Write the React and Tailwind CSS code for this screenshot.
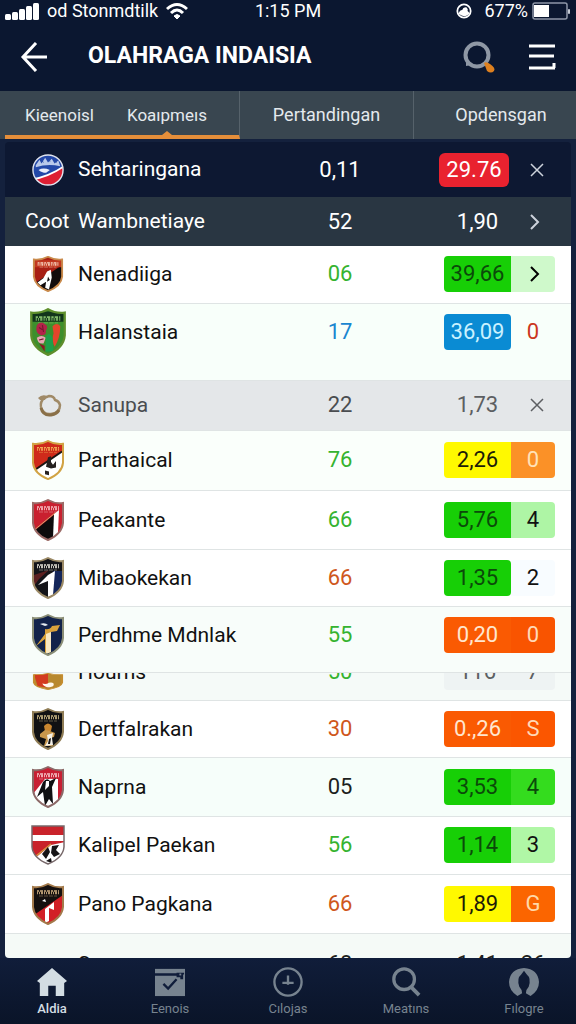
import React, { useId, useState } from 'react';

const Shield = ({ edge, base, className, children }) => {
  const id = useId();
  const outline = 'M2 4 Q10 5 17 1 Q24 5 32 4 V24 Q31 35 17 41 Q3 35 2 24 Z';
  return (
    <svg viewBox="0 0 34 42" preserveAspectRatio="none" className={className} aria-hidden="true">
      <clipPath id={id}>
        <path d={outline} />
      </clipPath>
      <g clipPath={`url(#${id})`}>
        <path d={outline} fill={base} />
        {children}
      </g>
      <path d={outline} fill="none" stroke={edge} strokeWidth="2" />
    </svg>
  );
};

const Band = ({ color }) => (
  <g stroke={color} fill="none">
    <path d="M6 8 H28" strokeWidth="1.5" strokeDasharray="2 1 3 1" opacity="0.9" />
    <path d="M6 10 H28" strokeWidth="2.5" strokeDasharray="1 1 1 1 2 1" opacity="0.8" />
    <path d="M8 13 H26" strokeWidth="1" strokeDasharray="4 1" opacity="0.4" />
  </g>
);

const crests = {
  globe: (
    <svg viewBox="0 0 34 34" className="mx-auto size-8" aria-hidden="true">
      <clipPath id="globe-clip">
        <circle cx="17" cy="17" r="16" />
      </clipPath>
      <g clipPath="url(#globe-clip)">
        <rect width="34" height="34" fill="#2348a8" />
        <path d="M4 12 L8 6 L10 10 L14 4 L17 9 L21 5 L24 10 L28 7 L30 13 Q17 10 4 14 Z" fill="#b9c9ea" />
        <path d="M10 6 L12 9 M18 4 L19 8 M25 6 L26 9" stroke="#2348a8" strokeWidth="1" />
        <path d="M7 17 Q12 14 19 17 L15 20 Q10 20 7 17 Z" fill="#e9eefb" />
        <path d="M0 26 Q18 23 34 12 V34 H0 Z" fill="#fff" />
        <path d="M0 28 Q18 25 34 14 V34 H0 Z" fill="#de1f33" />
      </g>
      <circle cx="17" cy="17" r="16" fill="none" stroke="#dfe3ee" strokeWidth="1.5" />
    </svg>
  ),
  nenadiiga: (
    <Shield edge="#c98a4b" base="#a81f14" className="mx-auto h-9 w-8">
      <path d="M0 34 L34 9 V42 H0 Z" fill="#120c0c" />
      <path d="M2 5 H32 V13 H2 Z" fill="#c2371f" />
      <Band color="#ffe9d6" />
      <path d="M6 31 L12 26 L16 18 L20 16 L21 25 L18 39 L14 37 L15 30 L9 34 Z" fill="#fff" />
      <path d="M17 24 L19 28 L16 30 Z" fill="#120c0c" />
    </Shield>
  ),
  halanstaia: (
    <Shield edge="#5f8f2c" base="#3d8f2d" className="mx-auto h-12 w-[38px]">
      <path d="M3 3 H31 V12 H3 Z" fill="#12351b" />
      <Band color="#8fca73" />
      <path d="M7 15 Q10 11 14 14 Q18 16 15 20 Q16 24 11 24 Q5 22 7 15 Z" fill="#b22349" />
      <path d="M7 26 Q11 23 15 26 L13 31 Q8 32 7 26 Z" fill="#e7a7b4" />
      <path d="M9 17 L12 19 M12 15 L13 21 M9 28 L13 27" stroke="#7a1430" strokeWidth="1" />
      <path d="M21 16 Q25 12 28 16 Q28 26 23 34 Q20 28 22 22 Z" fill="#e5452b" />
      <path d="M15 25 Q18 20 21 26 L22 38 H15 Z" fill="#1da04b" />
      <path d="M9 31 L14 33 L14 38 Z" fill="#8c1823" />
    </Shield>
  ),
  sanupa: (
    <svg viewBox="0 0 26 26" className="ml-5 size-[26px]" aria-hidden="true">
      <path d="M7 6 Q3 10 4 15 Q6 23 14 22 Q23 21 23 13 Q22 9 18 8 Q17 4 12 4 L7 6 Z" fill="none" stroke="#a08a67" strokeWidth="2.5" />
      <path d="M1 6 Q5 2 10 4 L8 8 L3 8 Z" fill="#a08a67" />
      <path d="M4 16 Q6 24 14 23 Q20 22 22 18" fill="none" stroke="#8a7048" strokeWidth="3" />
    </svg>
  ),
  parthaical: (
    <Shield edge="#d1a344" base="#cf2a1a" className="mx-auto h-10 w-[34px]">
      <Band color="#f3b65a" />
      <path d="M3 32 L31 12 V42 H3 Z" fill="#fff" />
      <path d="M3 32 L31 12" stroke="#1b1412" strokeWidth="2" />
      <path d="M17 18 L20 17 L20 23 L22 26 L25 22 L25 29 L20 30 L15 28 Z M14 32 L18 33 L18 37 L14 36 Z" fill="#26201f" />
    </Shield>
  ),
  peakante: (
    <Shield edge="#9b6a66" base="#c9202f" className="mx-auto h-[42px] w-[34px]">
      <Band color="#f7c9cb" />
      <path d="M2 33 L24 15 L23 42 H2 Z" fill="#0d0b0c" />
      <path d="M23 15 L28 11 L27 34 L22 39 Z" fill="#fff" />
      <path d="M2 32 L24 14" stroke="#d9a36b" strokeWidth="1" />
    </Shield>
  ),
  mibaokekan: (
    <Shield edge="#9c8a66" base="#141418" className="mx-auto h-[42px] w-[34px]">
      <path d="M22 14 H34 V42 H22 Z" fill="#14265a" />
      <path d="M3 18 L18 13 L8 22 L3 29 Z" fill="#5b2020" />
      <Band color="#f3efe4" />
      <path d="M7 28 L17 18 L24 14 L22 38 L17 40 V24 Z" fill="#fff" />
    </Shield>
  ),
  perdhme: (
    <Shield edge="#8b8e76" base="#12224a" className="mx-auto h-[42px] w-[34px]">
      <path d="M9 10 Q14 8 17 11 L14 12 Z" fill="#e8edf2" />
      <path d="M14 15 Q19 16 21 12 L29 11 L26 17 L20 18 V38 L14 40 V25 L5 32 L14 20 Z" fill="#d9a23c" />
      <path d="M15 20 L20 18 V38 L15 40 Z" fill="#f8e8c2" />
    </Shield>
  ),
  hourns: (
    <Shield edge="#c58d2f" base="#b8892f" className="mx-auto h-[34px] w-8">
      <path d="M2 2 H17 V36 L6 33 Z" fill="#d33b1f" />
      <path d="M11 26 Q15 29 18 24 Q24 22 23 30 Q22 35 16 35 Q12 33 11 26 Z" fill="#fff7ec" />
    </Shield>
  ),
  dertfalrakan: (
    <Shield edge="#8f7c55" base="#111113" className="mx-auto h-[42px] w-[34px]">
      <Band color="#d9c48e" />
      <path d="M13 18 Q17 13 21 18 L20 23 H14 Z" fill="#c98630" />
      <path d="M9 26 L14 22 L19 23 L24 25 L23 29 L19 30 L22 38 L13 38 L15 31 L9 29 Z" fill="#c9974c" />
      <path d="M16 27 L22 25 L21 30 L22 37 L14 38 L17 33 Z" fill="#f4f1e8" />
      <path d="M18 31 L20 30 L19 36 L17 36 Z" fill="#111113" />
    </Shield>
  ),
  naprna: (
    <Shield edge="#8c6a68" base="#c81f33" className="mx-auto h-[42px] w-[34px]">
      <Band color="#f7cfd2" />
      <path d="M2 28 L14 13 L27 13 V34 L17 42 H2 Z" fill="#fff" />
      <path d="M12 16 Q16 11 19 15 L25 12 L21 21 L22 38 L18 33 L14 40 L12 26 L6 31 Z" fill="#101012" />
      <path d="M15 15 L18 15 L18 20 L14 24 Z" fill="#fff" />
    </Shield>
  ),
  kalipel: (
    <svg viewBox="0 0 34 40" className="mx-auto h-10 w-[34px]" aria-hidden="true">
      <clipPath id="kalipel-clip">
        <path d="M1 1 H33 V22 Q32 33 17 39 Q2 33 1 22 Z" />
      </clipPath>
      <g clipPath="url(#kalipel-clip)">
        <rect width="34" height="40" fill="#c9232b" />
        <rect y="10" width="34" height="6" fill="#fff" />
        <path d="M3 34 L20 20 L34 17 V40 H3 Z" fill="#fff" />
        <path d="M5 31 L20 19" stroke="#d39a3d" strokeWidth="1.5" />
        <path d="M11 29 L17 22 L19 27 L15 34 Z M21 21 L28 20 L25 25 L29 29 L23 32 L20 28 Z M15 36 L20 33 L21 38 Z" fill="#161416" />
      </g>
      <path d="M1 1 H33 V22 Q32 33 17 39 Q2 33 1 22 Z" fill="none" stroke="#77696b" strokeWidth="1.5" />
    </svg>
  ),
  pano: (
    <Shield edge="#a37a4b" base="#15100f" className="mx-auto h-[42px] w-[34px]">
      <path d="M3 32 L32 12 V42 H3 Z" fill="#d21f26" />
      <Band color="#dcb98a" />
      <path d="M11 18 L14 16 L15 19 Z" fill="#fff" />
      <path d="M14 26 L23 19 L23 27 L18 25 V38 L14 40 Z" fill="#fff" />
    </Shield>
  ),
};

const times = [
  { crest: 'nenadiiga', nome: 'Nenadiiga', pontos: '06', cor: 'text-[#35b32f]', valor: '39,66', caixa: 'bg-[#17cf06] text-[#0b4a0a]', rank: '>', rankCor: 'bg-[#cff9cb] text-black', linha: 'h-[57px] bg-white' },
  { crest: 'halanstaia', nome: 'Halanstaia', pontos: '17', cor: 'text-[#1a86d0]', valor: '36,09', caixa: 'bg-[#0a8bd3] text-[#c9f1ff] rounded-r', rank: '0', rankCor: 'text-[#cb3720]', linha: 'h-[77px] bg-[#f8fffa] *:pb-5' },
  { crest: 'sanupa', nome: 'Sanupa', pontos: '22', cor: 'text-[#4a4d50]', valor: '1,73', caixa: 'text-[#5c5f62]', rank: 'x', rankCor: 'pl-2 text-[#5c5f62]', linha: 'h-[50px] bg-[#e4e7e9] text-[#4a4d50]' },
  { crest: 'parthaical', nome: 'Parthaical', pontos: '76', cor: 'text-[#35b32f]', valor: '2,26', caixa: 'bg-[#fff900] text-[#1c1c08]', rank: '0', rankCor: 'bg-[#fb9127] text-[#ffe2b8]', linha: 'h-[60px] bg-[#fafffb]' },
  { crest: 'peakante', nome: 'Peakante', pontos: '66', cor: 'text-[#35b32f]', valor: '5,76', caixa: 'bg-[#17cf06] text-[#0b4a0a]', rank: '4', rankCor: 'bg-[#aef5a5] text-[#111]', linha: 'h-[59px] bg-white' },
  { crest: 'mibaokekan', nome: 'Mibaokekan', pontos: '66', cor: 'text-[#cf571c]', valor: '1,35', caixa: 'bg-[#17cf06] text-[#0b4a0a] rounded-r-sm', rank: '2', rankCor: 'bg-[#f8fcff] text-[#111]', linha: 'h-[57px] bg-white' },
  { crest: 'perdhme', nome: 'Perdhme Mdnlak', pontos: '55', cor: 'text-[#35b32f]', valor: '0,20', caixa: 'bg-[#fa5a02] text-[#ffe6cf]', rank: '0', rankCor: 'bg-[#f95400] text-[#ffd9b8]', linha: 'h-[66px] bg-[#f8fdfa] *:pb-2' },
  { crest: 'hourns', nome: 'Hourns', pontos: '50', cor: 'text-[#35b32f]', valor: '116', caixa: 'bg-[#eef3f3] text-[#5c5f62]', rank: '7', rankCor: 'bg-[#eef3f3] text-[#5c5f62]', linha: 'bg-[#f5faf8]', corte: 'topo' },
  { crest: 'dertfalrakan', nome: 'Dertfalrakan', pontos: '30', cor: 'text-[#cf571c]', valor: '0.,26', caixa: 'bg-[#fa5a02] text-[#ffe6cf]', rank: 'S', rankCor: 'bg-[#fb5600] text-[#ffd9b8]', linha: 'h-[57px] bg-white' },
  { crest: 'naprna', nome: 'Naprna', pontos: '05', cor: 'text-[#1d1f20]', valor: '3,53', caixa: 'bg-[#17cf06] text-[#0b4a0a]', rank: '4', rankCor: 'bg-[#34dc1e] text-[#0b4a0a]', linha: 'h-[59px] bg-[#f6fefa]' },
  { crest: 'kalipel', nome: 'Kalipel Paekan', pontos: '56', cor: 'text-[#35b32f]', valor: '1,14', caixa: 'bg-[#17cf06] text-[#0b4a0a]', rank: '3', rankCor: 'bg-[#b0f7a6] text-[#111]', linha: 'h-[58px] bg-white' },
  { crest: 'pano', nome: 'Pano Pagkana', pontos: '66', cor: 'text-[#cf571c]', valor: '1,89', caixa: 'bg-[#fff900] text-[#1c1c08]', rank: 'G', rankCor: 'bg-[#fb6500] text-[#ffd9a8]', linha: 'h-[59px] bg-white' },
  { nome: 'Sa', pontos: '68', cor: 'text-[#1d1f20]', valor: '1,41', caixa: 'text-[#1d1f20]', rank: '26', rankCor: 'text-[#1d1f20]', linha: 'bg-[#f5faf7]', corte: 'base' },
];

const Close = () => (
  <svg viewBox="0 0 16 16" className="size-4" fill="none" stroke="currentColor" strokeWidth="1.5" aria-hidden="true">
    <path d="M2 2 L14 14 M14 2 L2 14" />
  </svg>
);

const Chevron = () => (
  <svg viewBox="0 0 16 16" className="size-4" fill="none" stroke="currentColor" strokeWidth="2" aria-hidden="true">
    <path d="M6 1 L13 8 L6 15" />
  </svg>
);

// Linhas cortadas mostram só a parte de baixo ou de cima do conteúdo
const Corte = ({ tipo, children }) => {
  if (tipo === 'topo') {
    return <div className="flex h-[27px] flex-col justify-end overflow-hidden pb-2.5">{children}</div>;
  }
  if (tipo === 'base') {
    return <div className="h-6 overflow-hidden pt-3">{children}</div>;
  }
  return children;
};

const Linha = ({ time }) => (
  <tr className={`border-b border-[#dfe4e4] last:border-b-0 ${time.linha}`}>
    <td className="pl-3">
      <Corte tipo={time.corte}>{time.crest && crests[time.crest]}</Corte>
    </td>
    <th scope="row" className="text-left text-[21px] font-normal whitespace-nowrap">
      <Corte tipo={time.corte}><span className="block leading-9">{time.nome}</span></Corte>
    </th>
    <td className={`text-center ${time.cor}`}>
      <Corte tipo={time.corte}><span className="block leading-9">{time.pontos}</span></Corte>
    </td>
    <td>
      <Corte tipo={time.corte}>
        <span className={`ml-auto block w-[67px] shrink-0 rounded-l text-center leading-9 ${time.caixa}`}>{time.valor}</span>
      </Corte>
    </td>
    <td className="pr-4">
      <Corte tipo={time.corte}>
        {time.rank === '>' || time.rank === 'x' ? (
          <button
            aria-label={time.rank === 'x' ? 'Tutup' : 'Buka'}
            className={`flex h-9 w-full items-center justify-center rounded-r ${time.rankCor}`}
          >
            {time.rank === 'x' ? <Close /> : <Chevron />}
          </button>
        ) : (
          <span className={`block shrink-0 rounded-r text-center leading-9 ${time.rankCor}`}>{time.rank}</span>
        )}
      </Corte>
    </td>
  </tr>
);

const menu = [
  {
    nome: 'Aldia',
    icone: (
      <svg viewBox="0 0 32 32" className="size-[30px]" fill="currentColor" aria-hidden="true">
        <path d="M16 1 L32 15 L29 17 V31 H20 V20 H12 V31 H3 V17 L0 15 Z" />
      </svg>
    ),
  },
  {
    nome: 'Eenois',
    icone: (
      <svg viewBox="0 0 32 32" className="size-[30px]" aria-hidden="true">
        <path d="M0 2 H32 V31 H0 Z" fill="currentColor" />
        <path d="M0 8 H24 M9 18 L14 23 L23 13" fill="none" stroke="#101d3a" strokeWidth="2.5" />
        <path d="M23 6 H31 V8 H30 V13 H27 V11 H23 Z" fill="#101d3a" />
        <path d="M26 7 H28 V9 H26 Z" fill="currentColor" />
      </svg>
    ),
  },
  {
    nome: 'Cılojas',
    icone: (
      <svg viewBox="0 0 32 32" className="size-[30px]" fill="none" stroke="currentColor" strokeWidth="2.5" aria-hidden="true">
        <circle cx="16" cy="16" r="14.5" />
        <path d="M16 9 V19 M10 17 H22" />
      </svg>
    ),
  },
  {
    nome: 'Meatıns',
    icone: (
      <svg viewBox="0 0 32 32" className="size-[30px]" fill="none" stroke="currentColor" aria-hidden="true">
        <circle cx="14" cy="13" r="11" strokeWidth="3.5" />
        <path d="M21 21 L30 30" strokeWidth="4" />
      </svg>
    ),
  },
  {
    nome: 'Fılogre',
    icone: (
      <svg viewBox="0 0 32 32" className="size-[30px]" fill="currentColor" aria-hidden="true">
        <path d="M9 31 Q0 25 0 16 Q1 2 16 1 Q31 2 32 16 Q32 25 23 31 L18 28 Q18 24 21 21 Q24 12 19 8 L16 4 L13 8 Q8 12 11 21 Q14 24 14 28 Z" />
      </svg>
    ),
  },
];

const App = () => {
  const [aba, setAba] = useState('Koaıpmeıs');

  return (
    <div className="flex min-h-screen flex-col bg-[#14213d] font-[Roboto,sans-serif]">
      <header className="bg-[#0b1730] text-white">
        <div className="flex h-[22px] items-center justify-between px-[5px] text-lg leading-5">
          <div className="flex flex-1 items-center gap-2">
            <svg viewBox="0 0 34 18" className="h-[18px] w-[34px]" fill="currentColor" aria-hidden="true">
              <rect x="0" y="12" width="6" height="6" rx="1.5" />
              <rect x="7" y="10" width="6" height="8" rx="1.5" />
              <rect x="14" y="7" width="6" height="11" rx="1.5" />
              <rect x="21" y="4" width="6" height="14" rx="1.5" />
              <rect x="28" y="1" width="6" height="17" rx="1.5" />
            </svg>
            <span className="whitespace-nowrap">od Stonmdtilk</span>
            <svg viewBox="0 0 22 18" className="h-[18px] w-[22px]" fill="none" stroke="currentColor" strokeWidth="3" aria-hidden="true">
              <path d="M1 7 Q11 -2 21 7 M5 11 Q11 5 17 11" />
              <path d="M8 14 Q11 11 14 14 L11 17 Z" fill="currentColor" strokeWidth="1" />
            </svg>
          </div>
          <span>1:15 PM</span>
          <div className="flex flex-1 items-center justify-end gap-1">
            <svg viewBox="0 0 18 18" className="mr-2 size-4" aria-hidden="true">
              <circle cx="9" cy="9" r="7.5" fill="none" stroke="currentColor" strokeWidth="2" />
              <path d="M3 12 Q4 8 7 8 Q8 4 12 5 Q14 7 13 9 Q16 11 14 13 Q9 17 3 12 Z" fill="currentColor" />
            </svg>
            <span>677%</span>
            <svg viewBox="0 0 39 18" className="h-[18px] w-[39px]" aria-hidden="true">
              <rect x="1" y="1" width="34" height="16" rx="2" fill="none" stroke="#8e97a8" strokeWidth="1.5" />
              <rect x="2" y="3" width="15" height="12" fill="#fff" />
              <rect x="36" y="7" width="2" height="5" rx="1" fill="#c4cad4" />
            </svg>
          </div>
        </div>

        <div className="flex h-[69px] items-center pr-5 pl-5">
          <button aria-label="Kembali">
            <svg viewBox="0 0 28 30" className="h-[30px] w-7" fill="none" stroke="currentColor" strokeWidth="3" aria-hidden="true">
              <path d="M16 1 L3 15 L16 29 M3 15 H27" />
            </svg>
          </button>
          <h1 className="ml-10 flex-1 text-[23px] font-bold whitespace-nowrap">OLAHRAGA INDAISIA</h1>
          <button aria-label="Cari">
            <svg viewBox="0 0 34 34" className="size-[34px]" aria-hidden="true">
              <circle cx="15" cy="15" r="11.5" fill="none" stroke="#8f98a5" strokeWidth="4" />
              <path d="M4 20 L4 26 L10 25 Z" fill="#8f98a5" />
              <path d="M22 23 Q24 21 28 24 Q34 28 32 31 Q29 34 25 31 Z" fill="#de801f" />
            </svg>
          </button>
          <button aria-label="Menu" className="ml-8">
            <svg viewBox="0 0 28 26" className="h-[26px] w-7" fill="none" stroke="currentColor" strokeWidth="3" aria-hidden="true">
              <path d="M1 2 H27 M1 12 H26 M1 24 H27 M26 19 V24" />
            </svg>
          </button>
        </div>
      </header>

      <nav className="flex h-12 bg-[#394650] text-lg text-[#e4e9ed]">
        <div className="ml-[5px] flex w-[235px] justify-between border-r border-b-4 border-r-[#56626b] border-b-[#e58e3a] pr-8 pl-5 text-[17px]">
          <button className="pt-1" onClick={() => setAba('Kieenoisl')}>Kieenoisl</button>
          <button className="relative pt-1" onClick={() => setAba('Koaıpmeıs')}>
            {aba}
            <span className="absolute bottom-0 left-1/2 size-0 -translate-x-1/2 border-x-5 border-b-4 border-x-transparent border-b-[#e58e3a]" />
          </button>
        </div>
        <button className="w-[174px] border-r border-[#56626b]">Pertandingan</button>
        <button className="flex-1 pl-3">Opdensgan</button>
      </nav>

      <main className="mt-[3px] flex-1 px-[5px] text-[22px] text-[#111]">
        <div className="overflow-hidden rounded">
          <table className="w-full table-fixed">
            <colgroup>
              <col className="w-[73px]" />
              <col />
              <col className="w-20" />
              <col className="w-[131px]" />
              <col className="w-[60px]" />
            </colgroup>
            <tbody>
              <tr className="h-[55px] bg-[#0d1832] text-white">
                <td className="pl-3">{crests.globe}</td>
                <th scope="row" className="text-left text-[21px] font-normal whitespace-nowrap">Sehtaringana</th>
                <td className="text-center">0,11</td>
                <td>
                  <span className="mr-0.5 ml-auto block w-[70px] rounded-md bg-[#e9222f] text-center leading-[34px]">29.76</span>
                </td>
                <td className="pr-4">
                  <button aria-label="Tutup" className="flex h-9 w-full items-center justify-center pl-2 text-[#cdd3dc]"><Close /></button>
                </td>
              </tr>
              <tr className="h-[49px] bg-[#293642] text-white">
                <td className="pl-5 text-[21px]">Coot</td>
                <th scope="row" className="text-left text-[21px] font-normal whitespace-nowrap">Wambnetiaye</th>
                <td className="text-center">52</td>
                <td><span className="ml-auto block w-[67px] text-center">1,90</span></td>
                <td className="pr-4">
                  <button aria-label="Buka" className="flex h-9 w-full items-center justify-center text-[#cdd3dc]"><Chevron /></button>
                </td>
              </tr>
              {times.map((time, idx) => (
                <Linha key={idx} time={time} />
              ))}
            </tbody>
          </table>
        </div>
      </main>

      <footer className="bg-linear-to-b from-[#101d3a] to-[#0a1428]">
        <nav className="flex h-[67px] items-center justify-between px-3 pt-1">
          {menu.map((item, idx) => (
            <a
              key={item.nome}
              href="#"
              className={`flex w-20 flex-col items-center gap-0.5 text-[13px] leading-5 ${idx === 0 ? 'font-medium text-[#d3dde3]' : 'text-[#77838f]'}`}
            >
              {item.icone}
              {item.nome}
            </a>
          ))}
        </nav>
      </footer>
    </div>
  );
};

export default App;
